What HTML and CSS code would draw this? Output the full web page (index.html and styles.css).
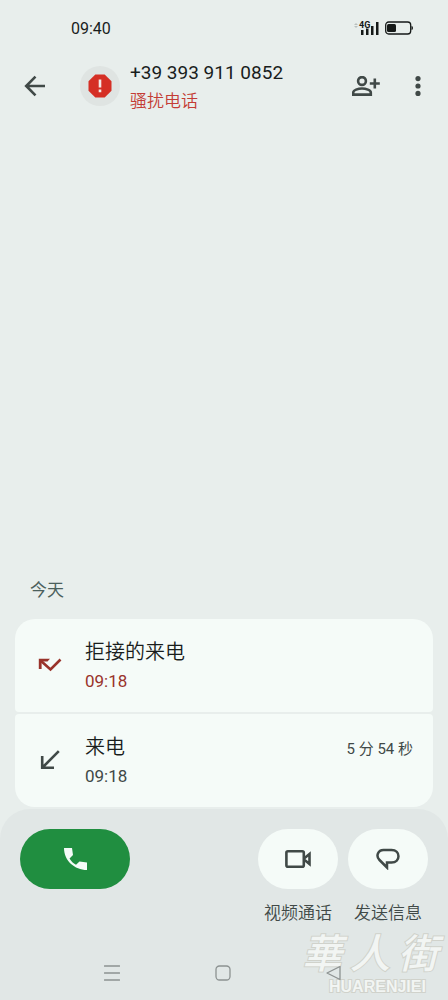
FILE: index.html
```html
<!DOCTYPE html>
<html lang="zh-CN">
<head>
<meta charset="utf-8">
<meta name="viewport" content="width=device-width, initial-scale=1">
<title>通话详情</title>
<link rel="stylesheet" href="styles.css">
</head>
<body>
<div class="status-bar">
  <time>09:40</time>
  <div class="status-icons">
    <svg width="26" height="14" viewBox="0 0 26 14" aria-label="4G">
      <path d="M0 4l2-2 2 2zM0 5l2 2 2-2z" fill="#b9c0be"/>
      <path d="M7 9h2.500v5H7zM12 7h2.500v7H12zM17 5h2.500v9H17zM22 1h2.500v13H22z" fill="#151918"/>
      <text x="5" y="7" class="network">4G</text>
    </svg>
    <svg width="28" height="14" viewBox="0 0 28 14" aria-label="电量">
      <rect x=".7" y="1" width="25" height="12" rx="3" fill="none" stroke="#151918" stroke-width="1.300"/>
      <rect x="2" y="3" width="9" height="8" rx="1.500" fill="#151918"/>
      <path d="M26.500 5q1.500 0 1.500 2t-1.500 2z" fill="#151918"/>
    </svg>
  </div>
</div>

<header class="app-bar">
  <button class="icon-button" aria-label="返回">
    <svg width="22" height="22" viewBox="0 0 22 22" fill="none" stroke="#404947" stroke-width="2.600"><path d="M21 11H2.500M11.500 1.700L2.200 11l9.300 9.300"/></svg>
  </button>
  <div class="avatar">
    <svg width="24" height="24" viewBox="0 0 24 24"><path d="M7.300.5h9.400l6.800 6.800v9.400l-6.800 6.800H7.300L.5 16.700V7.300z" fill="#d52f25"/><path d="M10.700 5.500h2.600v8h-2.600zM10.700 15.500h2.600v2.700h-2.600z" fill="#f4e9e6"/></svg>
  </div>
  <div class="caller">
    <h1>+39 393 911 0852</h1>
    <p>骚扰电话</p>
  </div>
  <button class="icon-button" aria-label="添加联系人">
    <svg width="28" height="20" viewBox="0 0 28 20" fill="none" stroke="#404947" stroke-width="2.600"><circle cx="10" cy="5" r="3.900"/><path d="M1.200 18.600v-2.100c0-2.300 4.800-4 8.800-4s8.800 1.700 8.800 4v2.100zM22.800 2.500v10M17.800 7.500h10"/></svg>
  </button>
  <button class="icon-button more" aria-label="更多选项">
    <svg width="6" height="20" viewBox="0 0 6 20" fill="#404947"><circle cx="3" cy="2.600" r="2.600"/><circle cx="3" cy="10" r="2.600"/><circle cx="3" cy="17.400" r="2.600"/></svg>
  </button>
</header>

<main class="history">
  <h2>今天</h2>
  <ul class="calls">
    <li class="call rejected">
      <svg class="call-icon" width="24" height="14" viewBox="0 0 24 14"><path d="M2.500 2.500l10 9L22.500 1.500" fill="none" stroke="#99332b" stroke-width="2.600"/><path d="M.8 11V.8H12L9.500 3.600H3.600V11z" fill="#99332b"/></svg>
      <div class="call-text"><h3>拒接的来电</h3><time>09:18</time></div>
    </li>
    <li class="call">
      <svg class="call-icon" width="20" height="20" viewBox="0 0 20 20" fill="none" stroke="#404947" stroke-width="2.600"><path d="M18.800 1.200L2.500 17.500M2.200 6v11.800H14"/></svg>
      <div class="call-text"><h3>来电</h3><time>09:18</time></div>
      <span class="duration">5 分 54 秒</span>
    </li>
  </ul>
</main>

<footer class="dock">
  <div class="actions">
    <button class="pill dial" aria-label="拨打电话">
      <svg width="24" height="24" viewBox="0 0 24 24" fill="#f5fbf8"><path d="M1 1h8l1 7-3.500 3.500c2 3.200 3.500 4.700 6.500 6.200l3.500-3.200 7.500 1V23C11.500 23 1 13.500 1 1z"/></svg>
    </button>
    <div class="action">
      <button class="pill" id="video" aria-labelledby="video-label">
        <svg width="26" height="20" viewBox="0 0 26 20" fill="none" stroke="#404947" stroke-width="2.600"><rect x="1.400" y="2.200" width="17.400" height="15.600" rx="1.500"/><path d="M19 9.500l5.500-4.500v10L19 10.500"/></svg>
      </button>
      <label id="video-label" for="video">视频通话</label>
    </div>
    <div class="action">
      <button class="pill" id="message" aria-labelledby="message-label">
        <svg width="24" height="22" viewBox="0 0 24 22" fill="none" stroke="#404947" stroke-width="2.500"><path d="M11 19.500L3.500 12C-.5 8 2 2 7.500 2h8c9.300 0 9.300 12.500 0 12.500H11z"/></svg>
      </button>
      <label id="message-label" for="message">发送信息</label>
    </div>
  </div>
  <nav class="system-nav" aria-label="系统导航">
    <button aria-label="最近任务"><svg width="16" height="16" viewBox="0 0 16 16"><path d="M.5 1h15M.5 8h15M.5 15h15"/></svg></button>
    <button aria-label="主屏幕"><svg width="16" height="16" viewBox="0 0 16 16"><rect x="1" y="1" width="14" height="14" rx="3.500"/></svg></button>
    <button aria-label="返回"><svg width="16" height="16" viewBox="0 0 16 16"><path d="M14 1.500v13L1 8z"/></svg></button>
  </nav>
  <div class="watermark" aria-hidden="true">
    <div class="mark-name"><span>華</span><span>人</span><span>街</span></div>
    <div class="mark-latin">HUARENJIEI</div>
  </div>
</footer>
</body>
</html>
```
FILE: styles.css
```css
* { box-sizing: border-box; }
body {
  margin: 0;
  min-height: 100vh;
  display: flex;
  flex-direction: column;
  background: #e8eeec;
  color: #191d1c;
  font-family: Roboto, "Noto Sans CJK SC", sans-serif;
}
h1, h2, h3, p, ul { margin: 0; padding: 0; font-weight: 400; }
button { border: 0; padding: 0; background: none; font: inherit; color: inherit; cursor: pointer; }
svg { display: block; flex: none; }

.status-bar {
  display: flex;
  justify-content: space-between;
  align-items: center;
  height: 56px;
  padding: 0 35px 0 71px;
  font-size: 16px;
}
.status-icons { display: flex; gap: 5px; }
.network { font-size: 9px; font-weight: 700; fill: #151918; stroke: #e8eeec; stroke-width: 1px; paint-order: stroke; }

.app-bar {
  display: flex;
  align-items: center;
  height: 59px;
  padding: 0 20px 0 14px;
}
.icon-button {
  width: 42px;
  height: 48px;
  display: grid;
  place-items: center;
}
.more { width: 20px; margin-left: 21px; }
.avatar {
  width: 40px;
  height: 40px;
  margin-left: 24px;
  border-radius: 50%;
  background: #dfe4e2;
  display: grid;
  place-items: center;
}
.caller { flex: 1; margin-left: 10px; padding-top: 3px; }
.caller h1 { font-size: 19px; line-height: 28px; white-space: nowrap; }
.caller p { font-size: 17px; font-weight: 350; line-height: 28px; color: #c43c35; }

.history { margin-top: auto; padding: 0 15px; }
.history h2 { padding-left: 15px; font-size: 17px; line-height: 24px; color: #4b605c; }
.calls { margin-top: 17px; list-style: none; display: grid; gap: 2px; }
.call {
  display: flex;
  align-items: center;
  height: 93px;
  padding: 0 20px 2px 0;
  background: #f5fbf8;
  border-radius: 4px;
}
.call:first-child { border-radius: 20px 20px 4px 4px; }
.call:last-child { border-radius: 4px 4px 20px 20px; }
.call-icon { width: 70px; }
.call-text { flex: 1; }
.call h3 { font-size: 20px; font-weight: 350; line-height: 32px; }
.call time { display: block; font-size: 17px; line-height: 26px; color: #404947; }
.rejected time { color: #99332b; }
.duration { align-self: flex-start; padding-top: 24px; font-size: 15px; line-height: 22px; color: #404947; }

.dock {
  position: relative;
  margin-top: 2px;
  padding: 20px 20px 13px;
  border-radius: 30px 30px 0 0;
  background: #e1e7e6;
}
.actions { display: flex; align-items: flex-start; gap: 10px; }
.pill {
  width: 80px;
  height: 60px;
  border-radius: 30px;
  background: #f5fbf8;
  display: grid;
  place-items: center;
}
.dial { width: 110px; margin-right: auto; background: #208e40; }
.action { display: grid; justify-items: center; gap: 11px; }
.action label { font-size: 17px; font-weight: 350; line-height: 26px; color: #404947; }
.system-nav {
  position: relative;
  z-index: 1;
  display: grid;
  grid-template-columns: repeat(3, 1fr);
  margin-top: 33px;
  padding: 0 38px 0 36px;
}
.system-nav button { height: 28px; display: grid; place-items: center; }
.system-nav svg { fill: none; stroke: #8c9291; stroke-width: 1.3; stroke-linecap: round; stroke-linejoin: round; }

.watermark {
  position: absolute;
  right: 10px;
  bottom: 6px;
  color: #f2f5f3;
  -webkit-text-stroke: 2px #d0d2cb;
  paint-order: stroke fill;
  pointer-events: none;
}
.mark-name {
  display: flex;
  gap: 8px;
  font: italic 500 40px/44px "Noto Sans CJK TC", sans-serif;
}
.mark-latin {
  margin-top: 6px;
  padding-left: 27px;
  font: 700 16px/15px "Liberation Sans", sans-serif;
}
```
